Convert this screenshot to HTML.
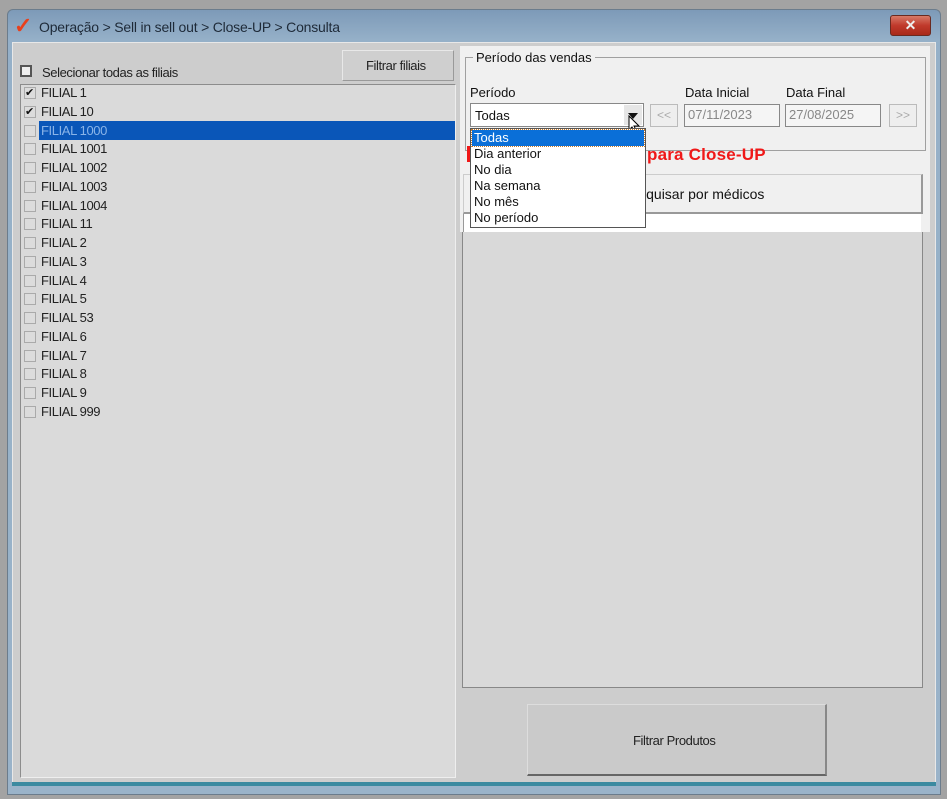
<!DOCTYPE html>
<html><head><meta charset="utf-8"><style>
*{margin:0;padding:0;box-sizing:border-box}
body{width:947px;height:799px;background:#a3a3a3;position:relative;overflow:hidden;font-family:"Liberation Sans",sans-serif}
.a{position:absolute}
.t{font-size:13px;color:#222;white-space:nowrap;letter-spacing:-0.4px}
.r{font-size:13px;color:#111;white-space:nowrap}
.cb{position:absolute;left:4px;width:12px;height:12px;border:1px solid #aaa;background:#dcdcdc}
</style></head><body>
<div class="a" style="left:7px;top:9px;width:934px;height:786px;border:1px solid #6b7c8c;border-radius:6px 6px 0 0;background:linear-gradient(#7d9ab8,#95b0c8 30px,#9ab3c9);"></div>
<div class="a" style="left:14px;top:14px;font-size:22px;color:#e8401c;font-weight:bold;line-height:24px">✓</div>
<div class="a t" style="left:39px;top:19px;font-size:14px;color:#1e2a38;letter-spacing:-0.2px">Operação &gt; Sell in sell out &gt; Close-UP &gt; Consulta</div>
<div class="a" style="left:890px;top:15px;width:41px;height:21px;border:1px solid #6a2a20;border-radius:3px;background:linear-gradient(#d77a68,#c0392b 50%,#a82a1a);color:#eee;font-size:14px;text-align:center;line-height:19px;font-weight:bold">✕</div>
<div class="a" style="left:12px;top:42px;width:924px;height:742px;background:#cdcdcd;border:1px solid #e8e8e8"></div>
<div class="a" style="left:12px;top:782px;width:924px;height:4px;background:#3b8aa0"></div>
<div class="a" style="left:20px;top:65px;width:12px;height:12px;border:2px solid #555;background:#eee"></div>
<div class="a t" style="left:42px;top:65px;font-size:13px">Selecionar todas as filiais</div>
<div class="a" style="left:342px;top:50px;width:112px;height:31px;background:#cfcfcf;border-right:1px solid #999;border-bottom:1px solid #999;border-top:1px solid #e8e8e8;border-left:1px solid #e8e8e8"></div>
<div class="a t" style="left:366px;top:58px;font-size:13px">Filtrar filiais</div>
<div class="a" style="left:20px;top:84px;width:436px;height:694px;background:#dadada;border:1px solid #8c8c8c;border-right-color:#eee;border-bottom-color:#eee"></div>
<div class="a" style="left:39px;top:121px;width:416px;height:19px;background:#0a56b8"></div>
<div class="a" style="left:20px;top:84px;width:436px">
<div style="position:relative;height:18.75px"><div class="cb" style="top:3px;font-size:11px;line-height:10px;color:#111">✔</div><span class="t" style="position:absolute;left:21px;top:1px">FILIAL 1</span></div>
<div style="position:relative;height:18.75px"><div class="cb" style="top:3px;font-size:11px;line-height:10px;color:#111">✔</div><span class="t" style="position:absolute;left:21px;top:1px">FILIAL 10</span></div>
<div style="position:relative;height:18.75px"><div class="cb" style="top:3px"></div><span class="t" style="position:absolute;left:21px;top:1px;color:#8ab4e8">FILIAL 1000</span></div>
<div style="position:relative;height:18.75px"><div class="cb" style="top:3px"></div><span class="t" style="position:absolute;left:21px;top:1px">FILIAL 1001</span></div>
<div style="position:relative;height:18.75px"><div class="cb" style="top:3px"></div><span class="t" style="position:absolute;left:21px;top:1px">FILIAL 1002</span></div>
<div style="position:relative;height:18.75px"><div class="cb" style="top:3px"></div><span class="t" style="position:absolute;left:21px;top:1px">FILIAL 1003</span></div>
<div style="position:relative;height:18.75px"><div class="cb" style="top:3px"></div><span class="t" style="position:absolute;left:21px;top:1px">FILIAL 1004</span></div>
<div style="position:relative;height:18.75px"><div class="cb" style="top:3px"></div><span class="t" style="position:absolute;left:21px;top:1px">FILIAL 11</span></div>
<div style="position:relative;height:18.75px"><div class="cb" style="top:3px"></div><span class="t" style="position:absolute;left:21px;top:1px">FILIAL 2</span></div>
<div style="position:relative;height:18.75px"><div class="cb" style="top:3px"></div><span class="t" style="position:absolute;left:21px;top:1px">FILIAL 3</span></div>
<div style="position:relative;height:18.75px"><div class="cb" style="top:3px"></div><span class="t" style="position:absolute;left:21px;top:1px">FILIAL 4</span></div>
<div style="position:relative;height:18.75px"><div class="cb" style="top:3px"></div><span class="t" style="position:absolute;left:21px;top:1px">FILIAL 5</span></div>
<div style="position:relative;height:18.75px"><div class="cb" style="top:3px"></div><span class="t" style="position:absolute;left:21px;top:1px">FILIAL 53</span></div>
<div style="position:relative;height:18.75px"><div class="cb" style="top:3px"></div><span class="t" style="position:absolute;left:21px;top:1px">FILIAL 6</span></div>
<div style="position:relative;height:18.75px"><div class="cb" style="top:3px"></div><span class="t" style="position:absolute;left:21px;top:1px">FILIAL 7</span></div>
<div style="position:relative;height:18.75px"><div class="cb" style="top:3px"></div><span class="t" style="position:absolute;left:21px;top:1px">FILIAL 8</span></div>
<div style="position:relative;height:18.75px"><div class="cb" style="top:3px"></div><span class="t" style="position:absolute;left:21px;top:1px">FILIAL 9</span></div>
<div style="position:relative;height:18.75px"><div class="cb" style="top:3px"></div><span class="t" style="position:absolute;left:21px;top:1px">FILIAL 999</span></div>
</div>
<div class="a" style="left:460px;top:46px;width:470px;height:186px;background:#f0f0f0"></div>
<div class="a" style="left:465px;top:57px;width:461px;height:94px;border:1px solid #a0a0a0"></div>
<div class="a r" style="left:473px;top:50px;background:#f0f0f0;padding:0 3px">Período das vendas</div>
<div class="a r" style="left:470px;top:85px">Período</div>
<div class="a" style="left:470px;top:103px;width:174px;height:24px;border:1px solid #888;background:#fff"></div>
<div class="a r" style="left:475px;top:108px">Todas</div>
<div class="a" style="left:624px;top:105px;width:18px;height:20px;background:#e6e6e6"></div>
<div class="a" style="left:628px;top:113px;width:0;height:0;border-left:5px solid transparent;border-right:5px solid transparent;border-top:6px solid #111"></div>
<svg class="a" style="left:628px;top:115px" width="14" height="20"><path d="M1 1 L1 15 L4 12 L7 18 L9 17 L6 11 L11 11 Z" fill="#fff" stroke="#000" stroke-width="1"/></svg>
<div class="a" style="left:650px;top:104px;width:28px;height:23px;border:1px solid #bbb;background:#eee;color:#aaa;font-size:12px;text-align:center;line-height:21px">&lt;&lt;</div>
<div class="a r" style="left:685px;top:85px">Data Inicial</div>
<div class="a" style="left:684px;top:104px;width:96px;height:23px;border:1px solid #888;background:#f5f5f5;color:#888;font-size:13px;padding:2px 3px">07/11/2023</div>
<div class="a r" style="left:786px;top:85px">Data Final</div>
<div class="a" style="left:785px;top:104px;width:96px;height:23px;border:1px solid #888;background:#f5f5f5;color:#888;font-size:13px;padding:2px 3px">27/08/2025</div>
<div class="a" style="left:889px;top:104px;width:28px;height:23px;border:1px solid #bbb;background:#eee;color:#aaa;font-size:12px;text-align:center;line-height:21px">&gt;&gt;</div>
<div class="a" style="left:647px;top:145px;font-size:17px;font-weight:bold;color:#f01818;white-space:nowrap;letter-spacing:0.2px">para Close-UP</div>
<div class="a" style="left:463px;top:174px;width:460px;height:40px;background:#f0f0f0;border:1px solid #ccc;border-right:2px solid #999;border-bottom:2px solid #999"></div>
<div class="a r" style="left:622px;top:186px;font-size:14px">Pesquisar por médicos</div>
<div class="a" style="left:463px;top:214px;width:458px;height:20px;background:#fff;border-left:1px solid #999"></div>
<div class="a" style="left:462px;top:232px;width:461px;height:456px;background:#d9d9d9;border:1px solid #888;border-top:none"></div>
<div class="a" style="left:470px;top:128px;width:176px;height:100px;background:#fff;border:1px solid #555"></div>
<div class="a" style="left:472px;top:130px;width:172px;height:16px;background:#0a6fd8;outline:1px dotted #c87a2a"></div>
<div class="a r" style="left:474px;top:130px;color:#fff;line-height:16px">Todas</div>
<div class="a r" style="left:474px;top:146px;line-height:16px">Dia anterior</div>
<div class="a r" style="left:474px;top:162px;line-height:16px">No dia</div>
<div class="a r" style="left:474px;top:178px;line-height:16px">Na semana</div>
<div class="a r" style="left:474px;top:194px;line-height:16px">No mês</div>
<div class="a r" style="left:474px;top:210px;line-height:16px">No período</div>
<div class="a" style="left:467px;top:146px;width:3px;height:16px;background:#f01818"></div>
<div class="a" style="left:527px;top:704px;width:300px;height:72px;background:#cacaca;border:1px solid #ddd;border-right:2px solid #888;border-bottom:2px solid #666"></div>
<div class="a t" style="left:633px;top:733px;font-size:13px">Filtrar Produtos</div>
</body></html>
